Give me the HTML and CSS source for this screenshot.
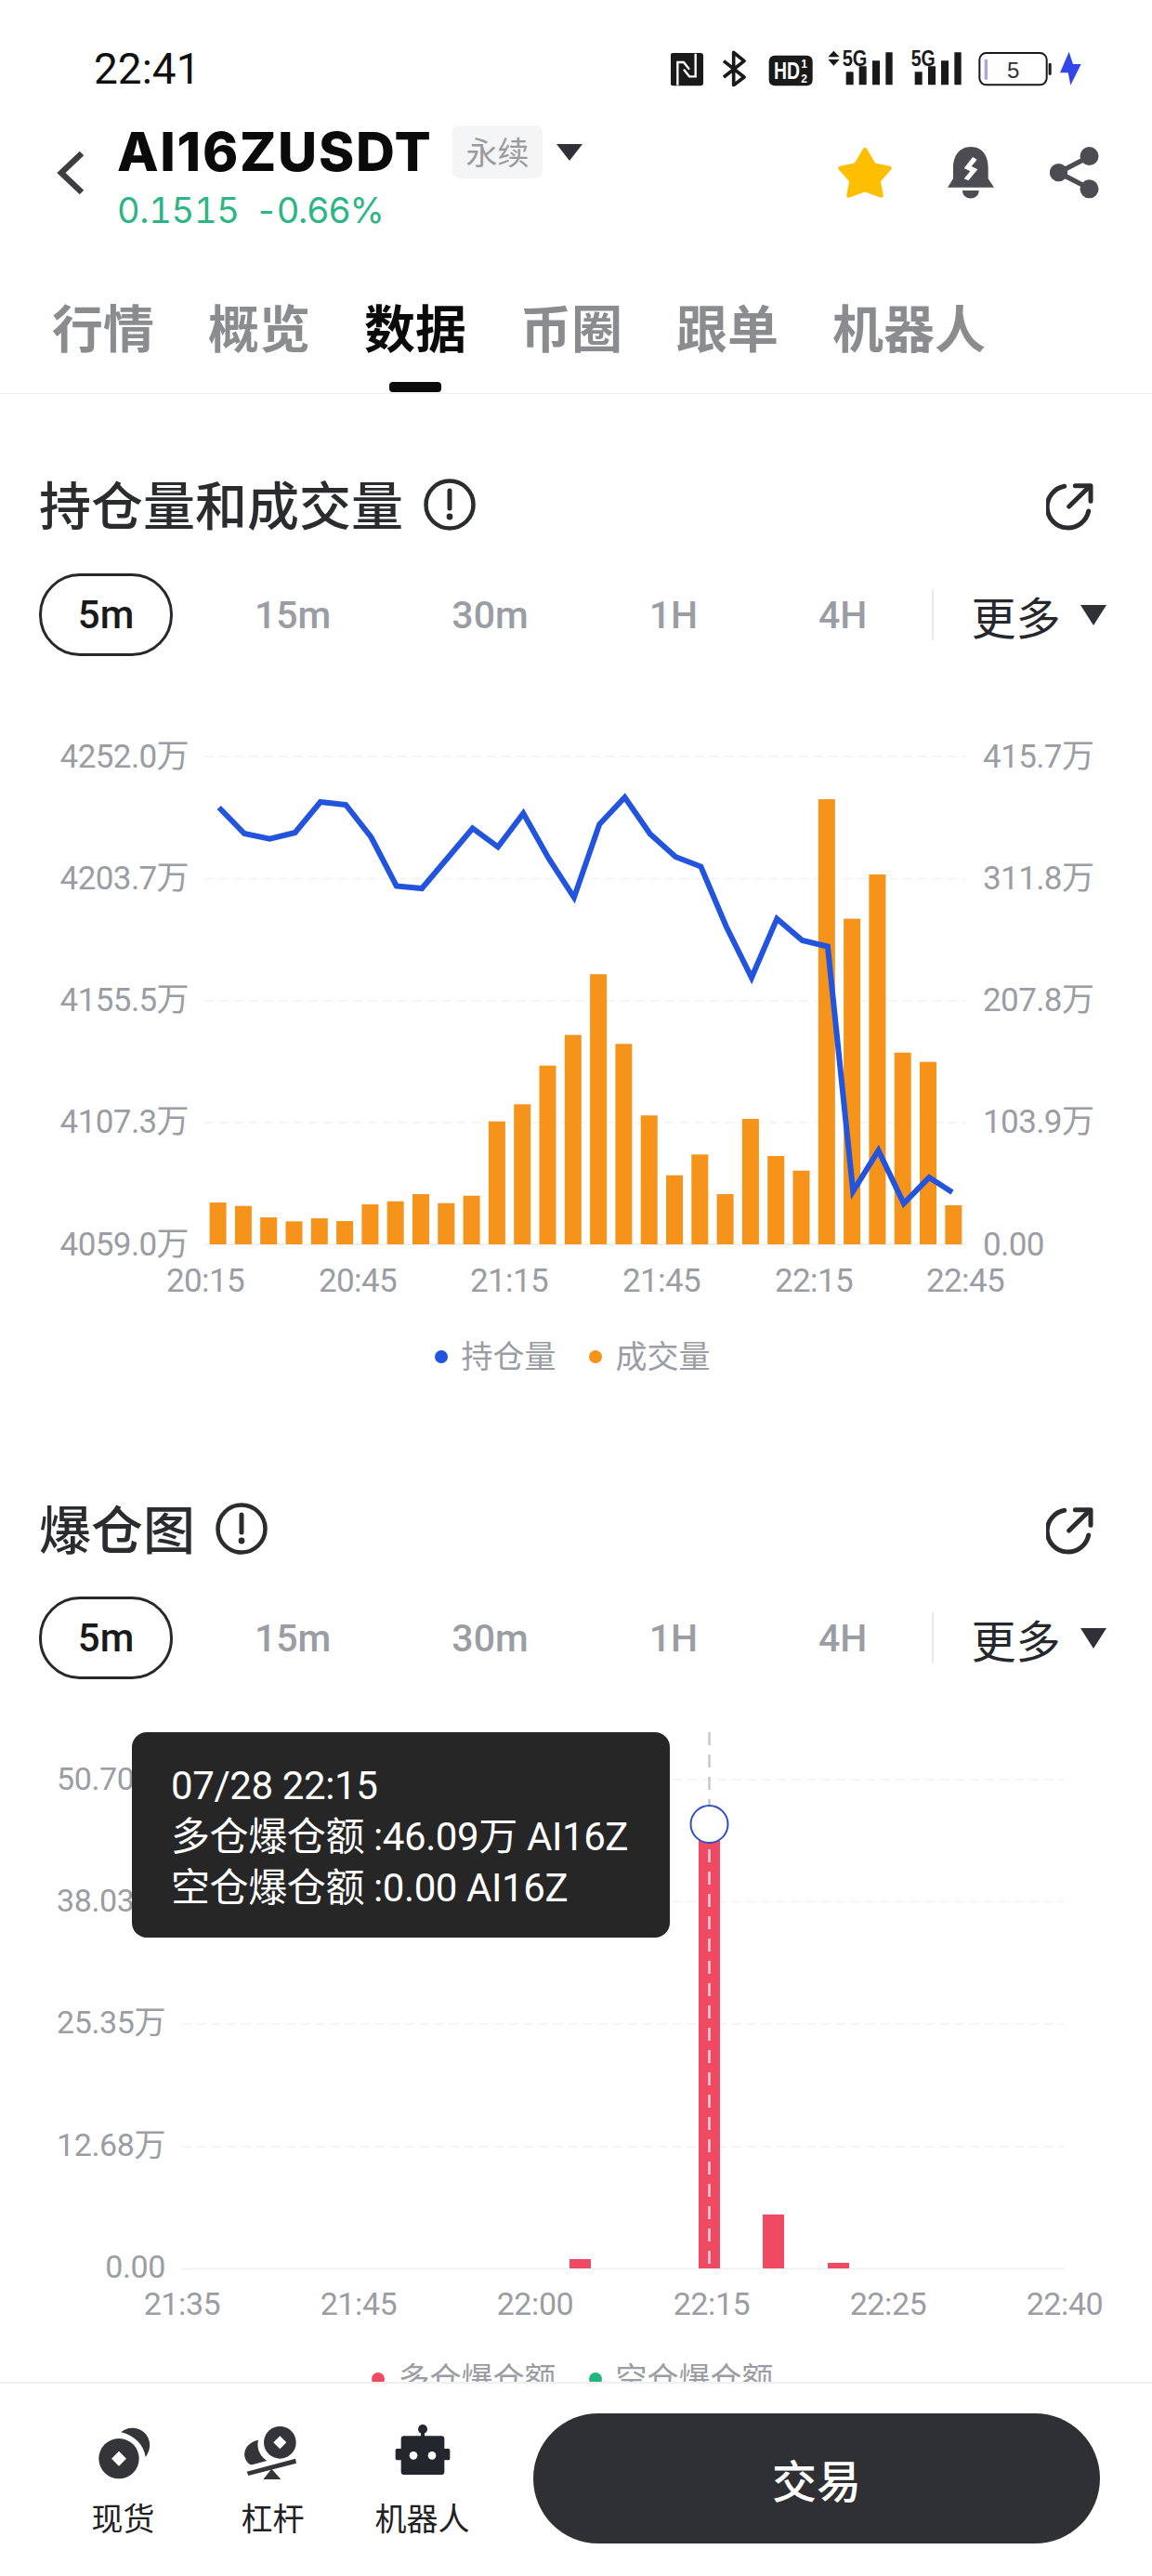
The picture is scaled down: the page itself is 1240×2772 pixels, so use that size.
FILE: index.html
```html
<!DOCTYPE html>
<html lang="zh">
<head>
<meta charset="utf-8">
<title>AI16ZUSDT 数据</title>
<link rel="stylesheet" href="styles.css">
</head>
<body>
<div class="page">
  <div class="status">
    <span class="clock">22:41</span>
    <svg class="status-icons" width="442" height="50" viewBox="95 40 1326 150">
      <rect x="94" y="82" width="106" height="106" rx="9" fill="#1a1a1a"/>
      <path d="M117 186V112H137L155 135M175 84V158H155L137 135" fill="none" stroke="#fff" stroke-width="7"/>
      <path d="M266 108L332 160L298 186V80L332 108L266 160" fill="none" stroke="#1a1a1a" stroke-width="11" stroke-linejoin="round"/>
      <rect x="412" y="90" width="141" height="98" rx="18" fill="#1a1a1a"/>
      <text class="st-hd" transform="translate(428 165) scale(1 1.32)">HD</text>
      <text class="st-half" x="516" y="130">1</text>
      <text class="st-half" x="516" y="179">2</text>
      <path d="M621 75L640 95H603ZM603 103H640L621 123Z" fill="#1a1a1a"/>
      <text class="st-5g" x="649" y="125" textLength="80" lengthAdjust="spacingAndGlyphs">5G</text>
      <path d="M661 147a4 4 0 0 1 4-4h16a4 4 0 0 1 4 4v38h-24zM703 125h24v60h-24zM746 107h24v78h-24zM789 80h22v105h-22z" fill="#1a1a1a"/>
      <text class="st-5g" x="871" y="125" textLength="78" lengthAdjust="spacingAndGlyphs">5G</text>
      <path d="M883 143h24v42h-24zM926 125h24v60h-24zM968 107h24v78h-24zM1011 80h22v105h-22z" fill="#1a1a1a"/>
      <rect x="1092" y="82" width="217" height="103" rx="22" fill="none" stroke="#1a1a1a" stroke-width="6"/>
      <rect x="1108" y="102" width="10" height="66" rx="3" fill="#a9a6e0"/>
      <rect x="1315" y="115" width="9" height="38" rx="3" fill="#1a1a1a"/>
      <text class="st-batt" x="1201" y="164">5</text>
      <path d="M1381 78L1352 146H1378L1386 186L1420 118H1394Z" fill="#3346e8"/>
    </svg>
  </div>

  <header class="head">
    <svg class="back" width="34" height="48" viewBox="0 0 34 48"><path d="M28 3L6 24L28 45" fill="none" stroke="#3c3e42" stroke-width="6.5"/></svg>
    <div class="head-main">
      <div class="symbol-row">
        <span class="symbol">AI16ZUSDT</span>
        <span class="tag">永续</span>
        <span class="caret caret-tag"></span>
      </div>
      <div class="price"><span class="last">0.1515</span><span class="chg">-0.66%</span></div>
    </div>
    <div class="head-actions">
      <svg width="58" height="56" viewBox="638 387 176 168"><path d="M726 396L755 445L806 456L770 497L779 545L726 526L673 545L682 497L646 456L697 445Z" fill="#fdbf00" stroke="#fdbf00" stroke-width="14" stroke-linejoin="round"/></svg>
      <svg width="50" height="56" viewBox="987 387 150 168"><path d="M1062 387C1022 387 1005 420 1005 455V490L987 518H1137L1118 490V455C1118 420 1102 387 1062 387ZM1035 528H1088C1088 562 1035 562 1035 528Z" fill="#4b4d52"/><path d="M1068 420L1040 456L1060 466L1040 490L1054 496L1084 460L1064 450L1082 428Z" fill="#fff"/></svg>
      <svg width="53" height="56" viewBox="1320 387 158 168"><path d="M1448 418L1348 470L1448 522" fill="none" stroke="#4b4d52" stroke-width="16"/><circle cx="1447" cy="417" r="30" fill="#4b4d52"/><circle cx="1348" cy="470" r="29" fill="#4b4d52"/><circle cx="1447" cy="523" r="30" fill="#4b4d52"/></svg>
    </div>
  </header>

  <nav class="tabs">
    <a class="tab">行情</a>
    <a class="tab">概览</a>
    <a class="tab tab-on">数据</a>
    <a class="tab">币圈</a>
    <a class="tab">跟单</a>
    <a class="tab">机器人</a>
  </nav>

  <section class="sec sec-oi">
    <div class="sec-head">
      <h2 class="sec-title">持仓量和成交量</h2>
      <svg class="info" width="56" height="56" viewBox="0 0 56 56"><circle cx="28" cy="28" r="25.5" fill="none" stroke="#2a2c30" stroke-width="4.5"/><path d="M28 13V32" stroke="#2a2c30" stroke-width="5" stroke-linecap="round"/><circle cx="28" cy="41" r="3.4" fill="#2a2c30"/></svg>
      <svg class="ext" width="52" height="52" viewBox="27 20 52 52"><path d="M46.7 23.3A22.5 22.5 0 1 0 72.7 50" fill="none" stroke="#2a2c30" stroke-width="5" stroke-linecap="round"/><path d="M51.7 45L74 23.3" fill="none" stroke="#2a2c30" stroke-width="5" stroke-linecap="round"/><path d="M58.3 22.7H75V39.3" fill="none" stroke="#2a2c30" stroke-width="5" stroke-linecap="round" stroke-linejoin="round"/></svg>
    </div>
    <div class="periods">
      <span class="pill">5m</span>
      <span class="per">15m</span>
      <span class="per">30m</span>
      <span class="per">1H</span>
      <span class="per">4H</span>
      <span class="per-sep"></span>
      <span class="more">更多</span>
      <span class="caret caret-more"></span>
    </div>
    <svg class="chart chart-oi" width="1240" height="620" viewBox="0 790 1240 620">
      <g class="grid">
        <path d="M220 814H1040M220 945.5H1040M220 1077H1040M220 1208H1040"/>
      </g>
      <path class="axis" d="M220 1339.5H1040"/>
      <g class="lbl lbl-r">
        <text x="203" y="826">4252.0万</text>
        <text x="203" y="957">4203.7万</text>
        <text x="203" y="1088">4155.5万</text>
        <text x="203" y="1219">4107.3万</text>
        <text x="203" y="1351">4059.0万</text>
      </g>
      <g class="lbl">
        <text x="1058" y="826">415.7万</text>
        <text x="1058" y="957">311.8万</text>
        <text x="1058" y="1088">207.8万</text>
        <text x="1058" y="1219">103.9万</text>
        <text x="1058" y="1351">0.00</text>
      </g>
      <g class="lbl lbl-c">
        <text x="221" y="1390">20:15</text>
        <text x="385" y="1390">20:45</text>
        <text x="548" y="1390">21:15</text>
        <text x="712" y="1390">21:45</text>
        <text x="876" y="1390">22:15</text>
        <text x="1039" y="1390">22:45</text>
      </g>
      <g class="bars-vol">
        <rect x="225.6" y="1294" width="18" height="45"/>
        <rect x="252.9" y="1297.7" width="18" height="41.3"/>
        <rect x="280.2" y="1310" width="18" height="29"/>
        <rect x="307.5" y="1314.3" width="18" height="24.7"/>
        <rect x="334.8" y="1311" width="18" height="28"/>
        <rect x="362.1" y="1314" width="18" height="25"/>
        <rect x="389.4" y="1296" width="18" height="43"/>
        <rect x="416.7" y="1292.7" width="18" height="46.3"/>
        <rect x="444" y="1285" width="18" height="54"/>
        <rect x="471.3" y="1294.7" width="18" height="44.3"/>
        <rect x="498.6" y="1286.7" width="18" height="52.3"/>
        <rect x="525.9" y="1206.7" width="18" height="132.3"/>
        <rect x="553.2" y="1188.3" width="18" height="150.7"/>
        <rect x="580.5" y="1146.7" width="18" height="192.3"/>
        <rect x="607.8" y="1113.7" width="18" height="225.3"/>
        <rect x="635.1" y="1048.3" width="18" height="290.7"/>
        <rect x="662.4" y="1123.3" width="18" height="215.7"/>
        <rect x="689.7" y="1200.3" width="18" height="138.7"/>
        <rect x="717" y="1264.7" width="18" height="74.3"/>
        <rect x="744.3" y="1242.3" width="18" height="96.7"/>
        <rect x="771.6" y="1285" width="18" height="54"/>
        <rect x="798.9" y="1204" width="18" height="135"/>
        <rect x="826.2" y="1244" width="18" height="95"/>
        <rect x="853.5" y="1259.7" width="18" height="79.3"/>
        <rect x="880.8" y="860" width="18" height="479"/>
        <rect x="908.1" y="988.6" width="18" height="350.4"/>
        <rect x="935.4" y="941" width="18" height="398"/>
        <rect x="962.7" y="1132.7" width="18" height="206.3"/>
        <rect x="990" y="1142.7" width="18" height="196.3"/>
        <rect x="1017.3" y="1297" width="18" height="42"/>
      </g>
      <polyline class="line-oi" points="235.7,869 263,897 290.3,902.6 317.6,896 344.9,863 372.2,866 399.5,901 426.8,953.5 454.1,956 481.4,923.7 508.7,891.4 536,911.4 563.3,875.3 590.6,923.7 617.9,965.8 645.2,887 672.5,858 699.8,897.4 727.1,922 754.4,932.5 781.7,997 809,1052 836.3,988.6 863.6,1012 890.9,1018.5 918.2,1282 945.5,1238 972.8,1295 1000.1,1267 1025,1283"/>
    </svg>
    <div class="legend legend-oi">
      <span class="leg"><i class="dot dot-blue"></i>持仓量</span>
      <span class="leg"><i class="dot dot-orange"></i>成交量</span>
    </div>
  </section>

  <section class="sec sec-liq">
    <div class="sec-head">
      <h2 class="sec-title">爆仓图</h2>
      <svg class="info" width="56" height="56" viewBox="0 0 56 56"><circle cx="28" cy="28" r="25.5" fill="none" stroke="#2a2c30" stroke-width="4.5"/><path d="M28 13V32" stroke="#2a2c30" stroke-width="5" stroke-linecap="round"/><circle cx="28" cy="41" r="3.4" fill="#2a2c30"/></svg>
      <svg class="ext" width="52" height="52" viewBox="27 20 52 52"><path d="M46.7 23.3A22.5 22.5 0 1 0 72.7 50" fill="none" stroke="#2a2c30" stroke-width="5" stroke-linecap="round"/><path d="M51.7 45L74 23.3" fill="none" stroke="#2a2c30" stroke-width="5" stroke-linecap="round"/><path d="M58.3 22.7H75V39.3" fill="none" stroke="#2a2c30" stroke-width="5" stroke-linecap="round" stroke-linejoin="round"/></svg>
    </div>
    <div class="periods">
      <span class="pill">5m</span>
      <span class="per">15m</span>
      <span class="per">30m</span>
      <span class="per">1H</span>
      <span class="per">4H</span>
      <span class="per-sep"></span>
      <span class="more">更多</span>
      <span class="caret caret-more"></span>
    </div>
    <div class="liq-wrap">
      <svg class="chart chart-liq" width="1240" height="650" viewBox="0 1860 1240 650">
        <g class="grid">
          <path d="M196 1915H1145M196 2046.5H1145M196 2178H1145M196 2310H1145"/>
        </g>
        <path class="axis" d="M196 2441.5H1145"/>
        <g class="lbl lbl-r lbl-s">
          <text x="178" y="1926">50.70万</text>
          <text x="178" y="2057">38.03万</text>
          <text x="178" y="2188">25.35万</text>
          <text x="178" y="2320">12.68万</text>
          <text x="178" y="2451">0.00</text>
        </g>
        <g class="lbl lbl-c lbl-s">
          <text x="196" y="2491">21:35</text>
          <text x="386" y="2491">21:45</text>
          <text x="576" y="2491">22:00</text>
          <text x="766" y="2491">22:15</text>
          <text x="956" y="2491">22:25</text>
          <text x="1146" y="2491">22:40</text>
        </g>
        <g class="bars-liq">
          <rect x="613" y="2431" width="23" height="10"/>
          <rect x="752" y="1963" width="23" height="478"/>
          <rect x="821" y="2383" width="23" height="58"/>
          <rect x="891" y="2435" width="23" height="6"/>
        </g>
        <path class="cross-top" d="M763.5 1864V1942"/>
        <path class="cross-in" d="M763.5 1990V2441"/>
        <circle class="marker" cx="763.5" cy="1963" r="20"/>
      </svg>
      <div class="tip">
        <div>07/28 22:15</div>
        <div>多仓爆仓额 :46.09万 AI16Z</div>
        <div>空仓爆仓额 :0.00 AI16Z</div>
      </div>
    </div>
    <div class="legend legend-liq">
      <span class="leg"><i class="dot dot-red"></i>多仓爆仓额</span>
      <span class="leg"><i class="dot dot-green"></i>空仓爆仓额</span>
    </div>
  </section>

  <footer class="bar">
    <div class="nav-item">
      <svg width="64" height="60" viewBox="150 50 190 180"><circle cx="230" cy="160" r="65" fill="#333538"/><path d="M230 136L254 160L230 184L206 160Z" fill="#fff"/><path d="M237 75C255 55 300 55 320 85C336 110 330 135 316 155C310 115 280 85 237 75Z" fill="#333538"/></svg>
      <span>现货</span>
    </div>
    <div class="nav-item">
      <svg width="64" height="60" viewBox="645 55 190 180"><circle cx="762" cy="113" r="52" fill="#333538"/><path d="M762 92L783 113L762 134L741 113Z" fill="#fff"/><path d="M692 105C660 110 640 140 650 165C655 178 665 185 672 185L720 172C700 160 685 135 692 105Z" fill="#333538"/><path d="M655 207L812 165L815 180L660 220Z" fill="#333538"/><path d="M735 198L765 232H708Z" fill="#333538"/></svg>
      <span>杠杆</span>
    </div>
    <div class="nav-item">
      <svg width="64" height="60" viewBox="1120 50 190 180"><circle cx="1215" cy="65" r="15" fill="#24262e"/><rect x="1209" y="65" width="12" height="26" fill="#24262e"/><rect x="1127" y="128" width="176" height="37" rx="5" fill="#24262e"/><rect x="1145" y="87" width="140" height="125" rx="9" fill="#24262e"/><circle cx="1185" cy="150" r="13" fill="#fff"/><circle cx="1245" cy="150" r="13" fill="#fff"/></svg>
      <span>机器人</span>
    </div>
    <button class="trade">交易</button>
  </footer>
</div>
</body>
</html>
```

FILE: styles.css
```css
* { box-sizing: border-box; }
html, body { margin: 0; padding: 0; background: #fff; }
body { font-family: "Roboto", "Noto Sans CJK SC", sans-serif; color: #2a2c30; }
.page { position: relative; width: 1240px; height: 2772px; overflow: hidden; background: #fff; }

/* status bar */
.status { display: flex; align-items: center; justify-content: space-between; height: 40px; margin-top: 54px; padding: 0 76px 0 101px; }
.clock { font-family: "Roboto", sans-serif; font-size: 46px; color: #111; }
.status-icons { display: block; align-self: flex-start; margin-top: -11px; }
.status-icons text { font-family: "Liberation Sans", sans-serif; font-weight: 700; }
.st-hd { font-size: 58px; fill: #fff; }
.st-half { font-size: 36px; fill: #fff; }
.st-5g { font-size: 72px; fill: #1a1a1a; }
.status-icons .st-batt { font-size: 72px; font-weight: 400; fill: #333; text-anchor: middle; }

/* header */
.head { display: flex; align-items: flex-start; height: 158px; margin-top: 36px; padding-left: 60px; padding-right: 57px; }
.back { display: block; flex: none; margin-top: 32px; }
.head-main { margin-left: 32px; }
.symbol-row { display: flex; align-items: flex-start; height: 66px; }
.symbol { width: 337px; font-family: "Inter", sans-serif; font-size: 58px; font-weight: 800; line-height: 66px; letter-spacing: 1.7px; white-space: nowrap; color: #0a0a0a; }
.tag { width: 97px; height: 57px; margin-left: 24px; margin-top: 5px; background: #f4f5f7; border-radius: 8px; font-family: "Noto Sans CJK SC", sans-serif; font-size: 34px; line-height: 55px; text-align: center; color: #9b9b9b; }
.caret { display: block; width: 0; height: 0; border-style: solid; border-color: #2f3136 transparent transparent; }
.caret-tag { margin-left: 15px; margin-top: 25px; border-width: 18px 14px 0; }
.price { display: flex; gap: 17px; margin-top: 7px; font-family: "Inter", sans-serif; font-size: 38px; font-feature-settings: "tnum"; line-height: 46px; color: #2cb585; }
.last { letter-spacing: -0.3px; }
.chg { letter-spacing: -1.4px; }
.head-actions { display: flex; align-items: center; gap: 60px; margin-left: auto; margin-top: 28px; }
.head-actions svg { display: block; }

/* tabs */
.tabs { display: flex; gap: 58px; height: 136px; padding-left: 56px; padding-top: 32px; border-bottom: 1px solid #efefef; }
.tab { position: relative; font-size: 55px; font-weight: 700; line-height: 70px; color: #8a8c90; }
.tab-on { color: #0a0a0a; }
.tab-on::after { content: ""; position: absolute; left: 27px; top: 91px; width: 56px; height: 11px; border-radius: 4px; background: #0a0a0a; }

/* sections */
.sec-oi { margin-top: 92px; }
.sec-head { display: flex; align-items: center; height: 60px; padding-left: 42px; padding-right: 62px; }
.sec-liq .sec-head { margin-top: 138px; }
.sec-title { margin: 0; font-size: 56px; font-weight: 500; line-height: 60px; color: #2a2c30; }
.info { display: block; margin-left: 22px; margin-top: -6px; }
.ext { display: block; margin-left: auto; }

.periods { display: flex; align-items: center; height: 89px; margin-top: 41px; padding-left: 42px; }
.sec-liq .periods { margin-top: 40px; }
.pill { width: 144px; height: 89px; border: 3px solid #26282c; border-radius: 44px; font-size: 42px; font-weight: 500; line-height: 83px; text-align: center; color: #1a1a1a; margin-right: 88px; }
.per { margin-right: 130px; font-size: 41px; font-weight: 500; color: #9a9da3; }
.per:nth-of-type(5) { margin-right: 70px; }
.per-sep { width: 2px; height: 55px; background: #e8eaf0; }
.more { margin-left: 40px; font-size: 48px; color: #26282c; }
.caret-more { margin-left: 22px; border-width: 22px 14px 0; }

/* charts */
.chart { display: block; }
.chart-oi { margin-top: 84px; }
.grid path { fill: none; stroke: #f2f2f2; stroke-width: 1.5; stroke-dasharray: 10 6; }
.axis { fill: none; stroke: #eeeeee; stroke-width: 1.5; }
.lbl text { font-family: "Roboto", "Noto Sans CJK SC", sans-serif; font-size: 35px; letter-spacing: -0.6px; fill: #9a9da3; }
.lbl-s text { font-size: 34px; letter-spacing: -0.4px; }
.lbl-r text { text-anchor: end; }
.lbl-c text { text-anchor: middle; }
.bars-vol rect { fill: #f6931a; }
.bars-liq rect { fill: #f04a63; }
.line-oi { fill: none; stroke: #2354dd; stroke-width: 6; stroke-linejoin: miter; }
.cross-top { stroke: #c6c8cc; stroke-width: 2.5; stroke-dasharray: 14 10; fill: none; }
.cross-in { stroke: #f5d5da; stroke-width: 2.5; stroke-dasharray: 14 10; fill: none; }
.marker { fill: #fff; stroke: #2f4fc4; stroke-width: 2; }

.legend { display: flex; justify-content: center; gap: 35px; padding-right: 8px; font-size: 34px; line-height: 40px; color: #9a9da3; }
.legend-oi { margin-top: 30px; }
.leg { display: flex; align-items: center; gap: 15px; }
.dot { display: block; width: 14px; height: 14px; border-radius: 50%; }
.dot-blue { background: #2354dd; }
.dot-orange { background: #f6931a; }
.dot-red { background: #f04a63; }
.dot-green { background: #22b67f; }

.liq-wrap { position: relative; margin-top: 53px; }
.tip { position: absolute; left: 142px; top: 4px; width: 579px; height: 221px; padding: 30px 0 0 42px; background: #262626; border-radius: 16px; font-size: 42px; letter-spacing: -0.4px; line-height: 55px; color: #fff; }
.legend-liq { margin-top: 30px; }

/* bottom bar */
.bar { position: absolute; left: 0; right: 0; bottom: 0; display: flex; align-items: flex-start; height: 209px; padding-left: 52px; background: #fff; border-top: 2px solid #f0f0f0; }
.nav-item { display: flex; flex-direction: column; align-items: center; width: 161px; padding-top: 44px; font-size: 34px; line-height: 40px; color: #1f2125; }
.nav-item svg { display: block; margin-bottom: 22px; }
.trade { width: 610px; height: 140px; margin-left: 39px; margin-top: 32px; border: 0; border-radius: 70px; background: #2e3033; font-family: inherit; font-size: 48px; font-weight: 500; color: #fff; }
```
